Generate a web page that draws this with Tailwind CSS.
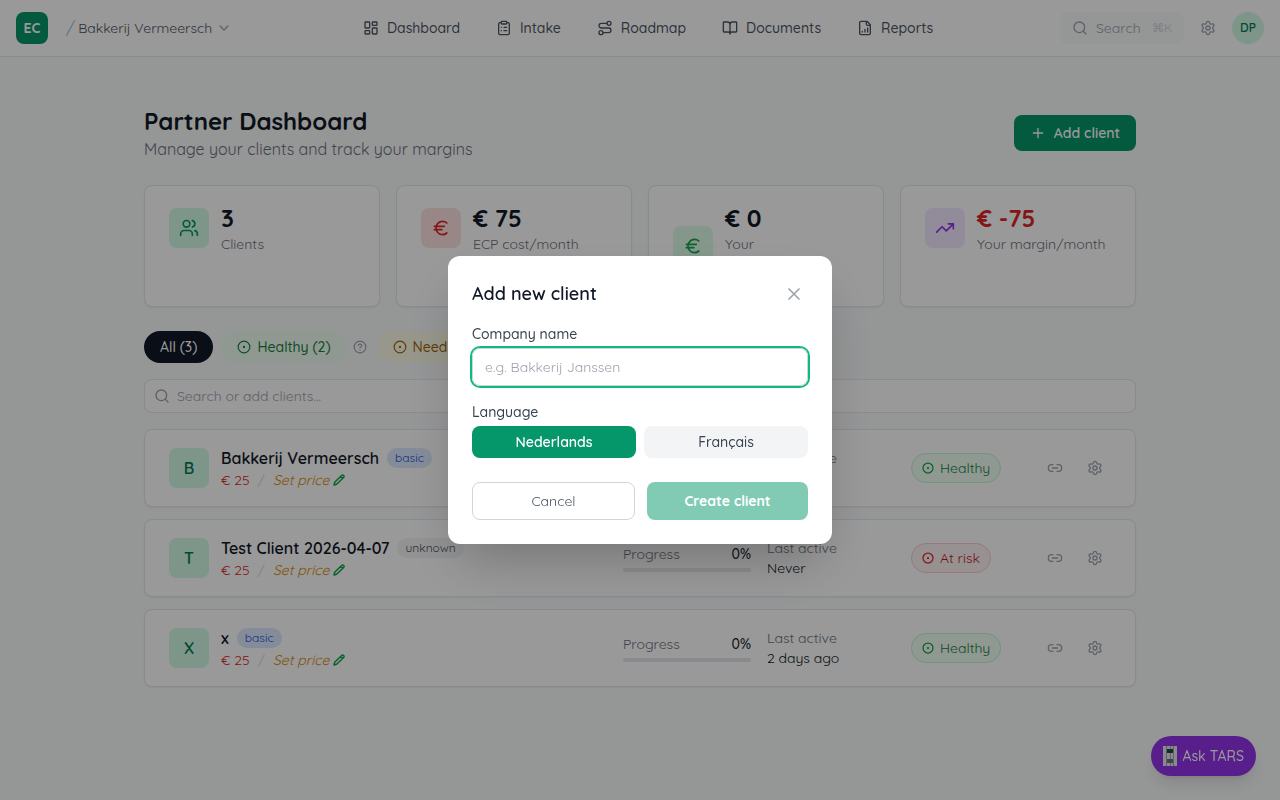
<!DOCTYPE html>
<html lang="en">
<head>
  <meta charset="UTF-8" />
  <meta name="viewport" content="width=device-width, initial-scale=1" />
  <title>Partner Dashboard</title>
  <script src="https://cdn.jsdelivr.net/npm/@tailwindcss/browser@4"></script>
</head>
<body class="bg-[#f9fafb] text-[#111827] min-h-screen font-['Quicksand','Inter',sans-serif]">
  <!-- icon set -->
  <svg class="hidden">
    <symbol id="i-dash" viewBox="0 0 24 24"><rect width="7" height="9" x="3" y="3" rx="1"/><rect width="7" height="5" x="14" y="3" rx="1"/><rect width="7" height="9" x="14" y="12" rx="1"/><rect width="7" height="5" x="3" y="16" rx="1"/></symbol>
    <symbol id="i-clip" viewBox="0 0 24 24"><rect width="8" height="4" x="8" y="2" rx="1"/><path d="M16 4h2a2 2 0 0 1 2 2v14a2 2 0 0 1-2 2H6a2 2 0 0 1-2-2V6a2 2 0 0 1 2-2h2M12 11h4M12 16h4M8 11h.01M8 16h.01"/></symbol>
    <symbol id="i-route" viewBox="0 0 24 24"><circle cx="6" cy="19" r="3"/><path d="M9 19h8.500a3.500 3.500 0 0 0 0-7h-11a3.500 3.500 0 0 1 0-7H15"/><circle cx="18" cy="5" r="3"/></symbol>
    <symbol id="i-book" viewBox="0 0 24 24"><path d="M12 7v14M3 18a1 1 0 0 1-1-1V4a1 1 0 0 1 1-1h5a4 4 0 0 1 4 4 4 4 0 0 1 4-4h5a1 1 0 0 1 1 1v13a1 1 0 0 1-1 1h-6a3 3 0 0 0-3 3 3 3 0 0 0-3-3z"/></symbol>
    <symbol id="i-report" viewBox="0 0 24 24"><path d="M15 2H6a2 2 0 0 0-2 2v16a2 2 0 0 0 2 2h12a2 2 0 0 0 2-2V7ZM14 2v4a2 2 0 0 0 2 2h4M8 18v-1M12 18v-4M16 18v-6"/></symbol>
    <symbol id="i-search" viewBox="0 0 24 24"><circle cx="11" cy="11" r="8"/><path d="m21 21-4.300-4.300"/></symbol>
    <symbol id="i-gear" viewBox="0 0 24 24"><path d="M9.671 4.136a2.340 2.340 0 0 1 4.659 0 2.340 2.340 0 0 0 3.319 1.915 2.340 2.340 0 0 1 2.330 4.033 2.340 2.340 0 0 0 0 3.831 2.340 2.340 0 0 1-2.330 4.033 2.340 2.340 0 0 0-3.319 1.915 2.340 2.340 0 0 1-4.659 0 2.340 2.340 0 0 0-3.320-1.915 2.340 2.340 0 0 1-2.330-4.033 2.340 2.340 0 0 0 0-3.831A2.340 2.340 0 0 1 6.350 6.051a2.340 2.340 0 0 0 3.319-1.915"/><circle cx="12" cy="12" r="3"/></symbol>
    <symbol id="i-users" viewBox="0 0 24 24"><path d="M16 21v-2a4 4 0 0 0-4-4H6a4 4 0 0 0-4 4v2"/><circle cx="9" cy="7" r="4"/><path d="M22 21v-2a4 4 0 0 0-3-3.870M16 3.130a4 4 0 0 1 0 7.750"/></symbol>
    <symbol id="i-euro" viewBox="0 0 24 24"><path d="M4 10h12M4 14h9M19 6a7.700 7.700 0 0 0-5.200-2A7.900 7.900 0 0 0 6 12c0 4.400 3.500 8 7.800 8 2 0 3.800-.8 5.200-2"/></symbol>
    <symbol id="i-trend" viewBox="0 0 24 24"><path d="M16 7h6v6M22 7l-8.500 8.500-5-5L2 17"/></symbol>
    <symbol id="i-dot" viewBox="0 0 24 24"><circle cx="12" cy="12" r="10"/><circle cx="12" cy="12" r="1"/></symbol>
    <symbol id="i-help" viewBox="0 0 24 24"><circle cx="12" cy="12" r="10"/><path d="M9.090 9a3 3 0 0 1 5.830 1c0 2-3 3-3 3M12 17h.01"/></symbol>
    <symbol id="i-pencil" viewBox="0 0 24 24"><path d="M21.174 6.812a1 1 0 0 0-3.986-3.987L3.842 16.174a2 2 0 0 0-.5.830l-1.321 4.352a.5.5 0 0 0 .623.622l4.353-1.320a2 2 0 0 0 .830-.497zM15 5l4 4"/></symbol>
    <symbol id="i-link" viewBox="0 0 24 24"><path d="M9 17H7A5 5 0 0 1 7 7h2M15 7h2a5 5 0 1 1 0 10h-2M8 12h8"/></symbol>
    <symbol id="i-x" viewBox="0 0 24 24"><path d="M18 6 6 18M6 6l12 12"/></symbol>
    <symbol id="i-plus" viewBox="0 0 24 24"><path d="M5 12h14M12 5v14"/></symbol>
    <symbol id="i-down" viewBox="0 0 24 24"><path d="m6 9 6 6 6-6"/></symbol>
  </svg>

  <header class="bg-white border-b border-[#e5e7eb]">
    <div class="h-14 px-4 flex items-center justify-between text-sm">
      <div class="flex items-center">
        <a href="#" class="size-8 rounded-lg bg-[#059669] text-white font-bold flex items-center justify-center">EC</a>
        <span class="ml-[18px] mr-[3px] text-lg font-light text-[#9ca3af]">/</span>
        <button type="button" class="flex items-center gap-1 mr-1 text-[#4b5563]">Bakkerij Vermeersch
          <svg class="size-4 fill-none stroke-[#9ca3af] stroke-2 [stroke-linecap:round]"><use href="#i-down"/></svg>
        </button>
      </div>
      <nav class="flex gap-1 text-[#4b5563] font-medium">
        <a href="#" class="flex items-center gap-2 px-4 py-1.5"><svg class="size-4 fill-none stroke-current stroke-2 [stroke-linecap:round] [stroke-linejoin:round]"><use href="#i-dash"/></svg>Dashboard</a>
        <a href="#" class="flex items-center gap-2 px-4 py-1.5"><svg class="size-4 fill-none stroke-current stroke-2 [stroke-linecap:round] [stroke-linejoin:round]"><use href="#i-clip"/></svg>Intake</a>
        <a href="#" class="flex items-center gap-2 px-4 py-1.5"><svg class="size-4 fill-none stroke-current stroke-2 [stroke-linecap:round] [stroke-linejoin:round]"><use href="#i-route"/></svg>Roadmap</a>
        <a href="#" class="flex items-center gap-2 px-4 py-1.5"><svg class="size-4 fill-none stroke-current stroke-2 [stroke-linecap:round] [stroke-linejoin:round]"><use href="#i-book"/></svg>Documents</a>
        <a href="#" class="flex items-center gap-2 px-4 py-1.5"><svg class="size-4 fill-none stroke-current stroke-2 [stroke-linecap:round] [stroke-linejoin:round]"><use href="#i-report"/></svg>Reports</a>
      </nav>
      <div class="flex items-center text-[#9ca3af]">
        <button type="button" class="w-31 h-8 px-3 rounded-lg bg-[#f9fafb] flex items-center gap-2">
          <svg class="size-4 fill-none stroke-current stroke-2 [stroke-linecap:round]"><use href="#i-search"/></svg>Search
          <kbd class="ml-auto font-['Quicksand','DejaVu_Sans',sans-serif] text-xs text-[#d1d5db]">⌘K</kbd>
        </button>
        <button type="button" aria-label="Settings" class="p-2 mx-2"><svg class="size-4 fill-none stroke-current stroke-2"><use href="#i-gear"/></svg></button>
        <button type="button" class="size-8 rounded-full bg-[#d1fae5] text-[#047857] text-xs font-semibold">DP</button>
      </div>
    </div>
  </header>

  <main class="max-w-5xl mx-auto px-4 py-12">
    <div class="flex items-center justify-between mb-6">
      <div>
        <h1 class="text-2xl font-bold">Partner Dashboard</h1>
        <p class="text-[#6b7280]">Manage your clients and track your margins</p>
      </div>
      <button type="button" class="h-9 px-4 rounded-lg bg-[#059669] text-white text-sm font-semibold flex items-center gap-2">
        <svg class="size-4 fill-none stroke-current stroke-2 [stroke-linecap:round]"><use href="#i-plus"/></svg>Add client
      </button>
    </div>

    <section class="grid grid-cols-4 gap-4 mb-6">
      <div class="bg-white border border-[#e5e7eb] rounded-lg shadow-xs px-6 py-4">
        <div class="flex items-center gap-3">
          <div class="size-10 rounded-lg bg-[#d1fae5] text-[#059669] flex items-center justify-center"><svg class="size-5 fill-none stroke-current stroke-2 [stroke-linecap:round]"><use href="#i-users"/></svg></div>
          <div><p class="text-2xl font-bold">3</p><p class="text-sm text-[#6b7280]">Clients</p></div>
        </div>
      </div>
      <div class="bg-white border border-[#e5e7eb] rounded-lg shadow-xs px-6 py-4">
        <div class="flex items-center gap-3">
          <div class="size-10 rounded-lg bg-[#fee2e2] text-[#dc2626] flex items-center justify-center"><svg class="size-5 fill-none stroke-current stroke-2 [stroke-linecap:round]"><use href="#i-euro"/></svg></div>
          <div><p class="text-2xl font-bold">€ 75</p><p class="text-sm text-[#6b7280]">ECP cost/month</p></div>
        </div>
      </div>
      <div class="bg-white border border-[#e5e7eb] rounded-lg shadow-xs px-6 py-4">
        <div class="flex items-center gap-3">
          <div class="size-10 rounded-lg bg-[#dcfce7] text-[#16a34a] flex items-center justify-center"><svg class="size-5 fill-none stroke-current stroke-2 [stroke-linecap:round]"><use href="#i-euro"/></svg></div>
          <div><p class="text-2xl font-bold">€ 0</p><p class="text-sm text-[#6b7280]">Your<br />price</p><svg class="size-4 fill-none stroke-[#9ca3af] stroke-2"><use href="#i-help"/></svg></div>
        </div>
      </div>
      <div class="bg-white border border-[#e5e7eb] rounded-lg shadow-xs px-6 py-4">
        <div class="flex items-center gap-3">
          <div class="size-10 rounded-lg bg-[#f3e8ff] text-[#9333ea] flex items-center justify-center"><svg class="size-5 fill-none stroke-current stroke-2 [stroke-linecap:round] [stroke-linejoin:round]"><use href="#i-trend"/></svg></div>
          <div class="whitespace-nowrap"><p class="text-2xl font-bold text-[#dc2626]">€ -75</p><p class="text-sm text-[#6b7280]">Your margin/month</p></div>
        </div>
      </div>
    </section>

    <div class="flex items-center text-sm font-medium mb-4">
      <button type="button" class="h-8 px-4 mr-2 rounded-full bg-[#111827] text-white">All (3)</button>
      <button type="button" class="h-8 px-4 rounded-full bg-[#f0fdf4] text-[#15803d] flex items-center gap-1.5"><svg class="size-3.5 fill-none stroke-current stroke-2"><use href="#i-dot"/></svg>Healthy (2)</button>
      <button type="button" aria-label="About healthy clients" class="px-1.5 mr-1 text-[#9ca3af]"><svg class="size-3.5 fill-none stroke-current stroke-2 [stroke-linecap:round]"><use href="#i-help"/></svg></button>
      <button type="button" class="h-8 px-4 rounded-full bg-[#fefce8] text-[#a16207] flex items-center gap-1.5"><svg class="size-3.5 fill-none stroke-current stroke-2"><use href="#i-dot"/></svg>Need help (0)</button>
    </div>

    <div class="relative mb-4">
      <svg class="absolute left-2.5 inset-y-0 my-auto size-4 fill-none stroke-[#9ca3af] stroke-2 [stroke-linecap:round]"><use href="#i-search"/></svg>
      <input type="text" aria-label="Search or add clients" placeholder="Search or add clients..." class="block w-full h-[34px] pl-8 pr-3 rounded-lg border border-[#e5e7eb] bg-white text-sm placeholder:text-[#9ca3af]" />
    </div>

    <section class="space-y-3">
      <article class="bg-white border border-[#e5e7eb] rounded-lg shadow-xs px-6 py-4 flex items-center gap-4 text-sm">
        <div class="flex-1 flex items-center gap-3">
          <div class="size-10 rounded-lg bg-[#d1fae5] text-[#047857] text-base font-semibold flex items-center justify-center">B</div>
          <div>
            <div class="flex items-center gap-2"><h3 class="text-base font-semibold">Bakkerij Vermeersch</h3><span class="px-2 py-0.5 rounded-full bg-[#dbeafe] text-[#1d4ed8] text-xs">basic</span></div>
            <div class="flex items-center gap-2"><span class="text-[#dc2626]">€ 25</span><span class="text-[#d1d5db]">/</span><button type="button" class="flex items-center gap-1 italic text-[#d98a06]">Set price<svg class="size-3 fill-none stroke-[#16a34a] stroke-3 [stroke-linejoin:round]"><use href="#i-pencil"/></svg></button></div>
          </div>
        </div>
        <div class="w-32">
          <div class="flex justify-between mb-1"><span class="text-[#6b7280]">Progress</span><span class="font-medium">0%</span></div>
          <div class="h-1 rounded-full bg-[#e5e7eb]"></div>
        </div>
        <div class="w-32"><p class="text-[#6b7280]">Last active</p><p>Today</p></div>
        <div class="w-28"><span class="inline-flex items-center gap-1.5 px-2.5 py-1 rounded-full border border-[#bbf7d0] bg-[#f0fdf4] text-[#15803d]"><svg class="size-3 fill-none stroke-[#16a34a] stroke-[2.5]"><use href="#i-dot"/></svg>Healthy</span></div>
        <div class="flex gap-2 text-[#9ca3af]">
          <button type="button" aria-label="Copy link" class="p-2"><svg class="size-4 fill-none stroke-current stroke-2 [stroke-linecap:round]"><use href="#i-link"/></svg></button>
          <button type="button" aria-label="Client settings" class="p-2"><svg class="size-4 fill-none stroke-current stroke-2"><use href="#i-gear"/></svg></button>
        </div>
      </article>

      <article class="bg-white border border-[#e5e7eb] rounded-lg shadow-xs px-6 py-4 flex items-center gap-4 text-sm">
        <div class="flex-1 flex items-center gap-3">
          <div class="size-10 rounded-lg bg-[#d1fae5] text-[#047857] text-base font-semibold flex items-center justify-center">T</div>
          <div>
            <div class="flex items-center gap-2"><h3 class="text-base font-semibold">Test Client 2026-04-07</h3><span class="px-2 py-0.5 rounded-full bg-[#f3f4f6] text-[#4b5563] text-xs">unknown</span></div>
            <div class="flex items-center gap-2"><span class="text-[#dc2626]">€ 25</span><span class="text-[#d1d5db]">/</span><button type="button" class="flex items-center gap-1 italic text-[#d98a06]">Set price<svg class="size-3 fill-none stroke-[#16a34a] stroke-3 [stroke-linejoin:round]"><use href="#i-pencil"/></svg></button></div>
          </div>
        </div>
        <div class="w-32">
          <div class="flex justify-between mb-1"><span class="text-[#6b7280]">Progress</span><span class="font-medium">0%</span></div>
          <div class="h-1 rounded-full bg-[#e5e7eb]"></div>
        </div>
        <div class="w-32"><p class="text-[#6b7280]">Last active</p><p>Never</p></div>
        <div class="w-28"><span class="inline-flex items-center gap-1.5 px-2.5 py-1 rounded-full border border-[#fecaca] bg-[#fef2f2] text-[#b91c1c]"><svg class="size-3 fill-none stroke-[#dc2626] stroke-[2.5]"><use href="#i-dot"/></svg>At risk</span></div>
        <div class="flex gap-2 text-[#9ca3af]">
          <button type="button" aria-label="Copy link" class="p-2"><svg class="size-4 fill-none stroke-current stroke-2 [stroke-linecap:round]"><use href="#i-link"/></svg></button>
          <button type="button" aria-label="Client settings" class="p-2"><svg class="size-4 fill-none stroke-current stroke-2"><use href="#i-gear"/></svg></button>
        </div>
      </article>

      <article class="bg-white border border-[#e5e7eb] rounded-lg shadow-xs px-6 py-4 flex items-center gap-4 text-sm">
        <div class="flex-1 flex items-center gap-3">
          <div class="size-10 rounded-lg bg-[#d1fae5] text-[#047857] text-base font-semibold flex items-center justify-center">X</div>
          <div>
            <div class="flex items-center gap-2"><h3 class="text-base font-semibold">x</h3><span class="px-2 py-0.5 rounded-full bg-[#dbeafe] text-[#1d4ed8] text-xs">basic</span></div>
            <div class="flex items-center gap-2"><span class="text-[#dc2626]">€ 25</span><span class="text-[#d1d5db]">/</span><button type="button" class="flex items-center gap-1 italic text-[#d98a06]">Set price<svg class="size-3 fill-none stroke-[#16a34a] stroke-3 [stroke-linejoin:round]"><use href="#i-pencil"/></svg></button></div>
          </div>
        </div>
        <div class="w-32">
          <div class="flex justify-between mb-1"><span class="text-[#6b7280]">Progress</span><span class="font-medium">0%</span></div>
          <div class="h-1 rounded-full bg-[#e5e7eb]"></div>
        </div>
        <div class="w-32"><p class="text-[#6b7280]">Last active</p><p>2 days ago</p></div>
        <div class="w-28"><span class="inline-flex items-center gap-1.5 px-2.5 py-1 rounded-full border border-[#bbf7d0] bg-[#f0fdf4] text-[#15803d]"><svg class="size-3 fill-none stroke-[#16a34a] stroke-[2.5]"><use href="#i-dot"/></svg>Healthy</span></div>
        <div class="flex gap-2 text-[#9ca3af]">
          <button type="button" aria-label="Copy link" class="p-2"><svg class="size-4 fill-none stroke-current stroke-2 [stroke-linecap:round]"><use href="#i-link"/></svg></button>
          <button type="button" aria-label="Client settings" class="p-2"><svg class="size-4 fill-none stroke-current stroke-2"><use href="#i-gear"/></svg></button>
        </div>
      </article>
    </section>
  </main>

  <button type="button" class="fixed right-6 bottom-6 h-10 px-3 rounded-full bg-[#9333ea] text-white text-sm font-medium shadow-lg flex items-center gap-[5px]">
    <svg viewBox="0 0 14 20" class="w-3.5 h-5"><path fill="#e5e7eb" d="M0 0h14v20H0z"/><path fill="#9ca3af" d="M3 0h1v20H3zM10 0h1v20h-1zM7 0h1v20H7z"/><path fill="#374151" d="M4 3h6v4H4z"/><path fill="#064e3b" d="M4 4h2v2H4zM8 4h2v2H8z"/><path fill="#6b7280" d="M4 13h6v4H4z"/></svg>Ask TARS
  </button>

  <div class="fixed inset-0 bg-black/40 flex items-center justify-center p-4">
    <div role="dialog" aria-labelledby="dialogTitle" class="w-full max-w-sm bg-white rounded-xl shadow-2xl p-6 text-sm">
      <div class="flex items-center justify-between mb-4">
        <h2 id="dialogTitle" class="text-lg font-semibold">Add new client</h2>
        <button type="button" aria-label="Close" class="p-1 text-[#9ca3af]"><svg class="size-5 fill-none stroke-current stroke-2 [stroke-linecap:round]"><use href="#i-x"/></svg></button>
      </div>
      <form>
        <label for="company" class="block font-medium text-[#374151] mb-1">Company name</label>
        <input id="company" type="text" placeholder="e.g. Bakkerij Janssen" class="block w-full px-3 py-2 mb-4 rounded-lg border border-[#d1d5db] ring-2 ring-[#10b981] outline-none placeholder:text-[#9ca3af]" />
        <p id="langLabel" class="font-medium text-[#374151] mb-1">Language</p>
        <div role="group" aria-labelledby="langLabel" class="flex gap-2 mb-6">
          <button type="button" class="flex-1 py-1.5 rounded-lg bg-[#059669] text-white font-semibold">Nederlands</button>
          <button type="button" class="flex-1 py-1.5 rounded-lg bg-[#f3f4f6] text-[#374151] font-medium">Français</button>
        </div>
        <div class="flex gap-3">
          <button type="button" class="flex-1 py-2 rounded-lg border border-[#d1d5db] text-[#4b5563]">Cancel</button>
          <button type="submit" disabled class="flex-1 py-2 rounded-lg bg-[#059669] text-white font-bold opacity-50">Create client</button>
        </div>
      </form>
    </div>
  </div>
</body>
</html>
